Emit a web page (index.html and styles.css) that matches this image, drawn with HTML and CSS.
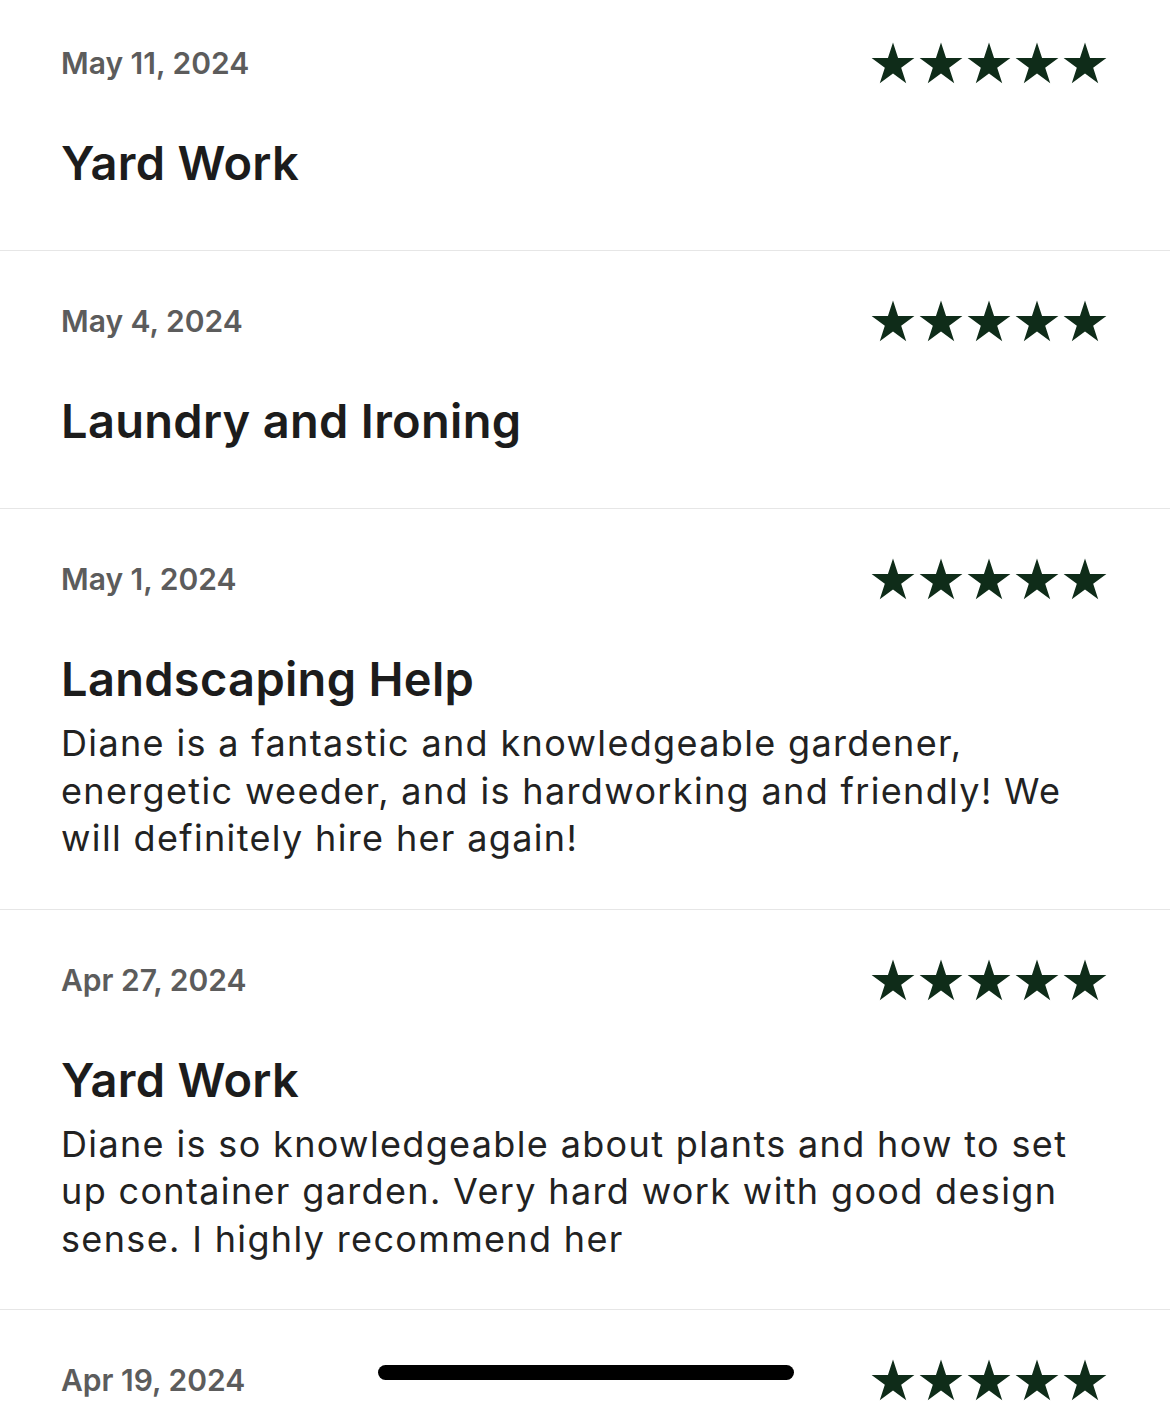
FILE: index.html
```html
<!DOCTYPE html>
<html lang="en">
<head>
   <meta charset="utf-8">
   <title>Reviews</title>
   <link rel="stylesheet" href="styles.css">
</head>
<body>

   <!-- one star, reused by every rating row -->
   <svg class="defs" width="0" height="0" aria-hidden="true">
      <symbol id="star" viewBox="0 0 48 44">
         <polygon points="24,1.5 29.05,17.04 45.4,17.05 32.18,26.66 37.22,42.2 24,32.6 10.78,42.2 15.82,26.66 2.6,17.05 18.95,17.04" />
      </symbol>
   </svg>

   <main class="review-list">

      <section class="review">
         <div class="review-head">
            <span class="review-date">May 11, 2024</span>
            <div class="stars">
               <svg class="star"><use href="#star"/></svg>
               <svg class="star"><use href="#star"/></svg>
               <svg class="star"><use href="#star"/></svg>
               <svg class="star"><use href="#star"/></svg>
               <svg class="star"><use href="#star"/></svg>
            </div>
         </div>
         <h2 class="review-title">Yard Work</h2>
         <p class="review-body"></p>
      </section>

      <section class="review">
         <div class="review-head">
            <span class="review-date">May 4, 2024</span>
            <div class="stars">
               <svg class="star"><use href="#star"/></svg>
               <svg class="star"><use href="#star"/></svg>
               <svg class="star"><use href="#star"/></svg>
               <svg class="star"><use href="#star"/></svg>
               <svg class="star"><use href="#star"/></svg>
            </div>
         </div>
         <h2 class="review-title">Laundry and Ironing</h2>
         <p class="review-body"></p>
      </section>

      <section class="review">
         <div class="review-head">
            <span class="review-date">May 1, 2024</span>
            <div class="stars">
               <svg class="star"><use href="#star"/></svg>
               <svg class="star"><use href="#star"/></svg>
               <svg class="star"><use href="#star"/></svg>
               <svg class="star"><use href="#star"/></svg>
               <svg class="star"><use href="#star"/></svg>
            </div>
         </div>
         <h2 class="review-title">Landscaping Help</h2>
         <p class="review-body">Diane is a fantastic and knowledgeable gardener, energetic weeder, and is hardworking and friendly! We will definitely hire her again!</p>
      </section>

      <section class="review">
         <div class="review-head">
            <span class="review-date">Apr 27, 2024</span>
            <div class="stars">
               <svg class="star"><use href="#star"/></svg>
               <svg class="star"><use href="#star"/></svg>
               <svg class="star"><use href="#star"/></svg>
               <svg class="star"><use href="#star"/></svg>
               <svg class="star"><use href="#star"/></svg>
            </div>
         </div>
         <h2 class="review-title">Yard Work</h2>
         <p class="review-body">Diane is so knowledgeable about plants and how to set up container garden. Very hard work with good design sense. I highly recommend her</p>
      </section>

      <!-- only the top of this one is on screen -->
      <section class="review">
         <div class="review-head">
            <span class="review-date">Apr 19, 2024</span>
            <div class="stars">
               <svg class="star"><use href="#star"/></svg>
               <svg class="star"><use href="#star"/></svg>
               <svg class="star"><use href="#star"/></svg>
               <svg class="star"><use href="#star"/></svg>
               <svg class="star"><use href="#star"/></svg>
            </div>
         </div>
      </section>

   </main>

   <!-- iOS home indicator, sits over the list -->
   <div class="home-indicator"></div>

</body>
</html>
```

FILE: styles.css
```css
body {
   margin: 0;
   background: #fff;
   font-family: Inter, "Noto Sans", sans-serif;
   overflow: hidden;
}
.defs {
   position: absolute;
}
.review-list {
   margin-top: -7px;
}
.review {
   display: flex;
   flex-direction: column;
   gap: 13px;
   padding: 48px 64px 46px 61px;
   border-bottom: 1px solid #e6e6e6;
}
.review-head {
   display: flex;
   justify-content: space-between;
   align-items: center;
   height: 44px;
   margin-bottom: 36px;
}
.review-date {
   font-size: 30px;
   font-weight: 600;
   color: #5c5c5c;
}
.stars {
   display: flex;
   margin-right: -3px;
}
.star {
   width: 48px;
   height: 44px;
   fill: #0f2c19;
}
.review-title {
   margin: 0;
   font-size: 47px;
   font-weight: 600;
   line-height: 57px;
   letter-spacing: 0.3px;
   color: #1c1c1c;
}
.review-body {
   margin: 0;
   font-size: 36px;
   line-height: 47.5px;
   letter-spacing: 1.35px;
   color: #222;
}
.home-indicator {
   position: fixed;
   left: 378px;
   bottom: 24px;
   width: 416px;
   height: 15px;
   border-radius: 8px;
   background: #000;
}
```
